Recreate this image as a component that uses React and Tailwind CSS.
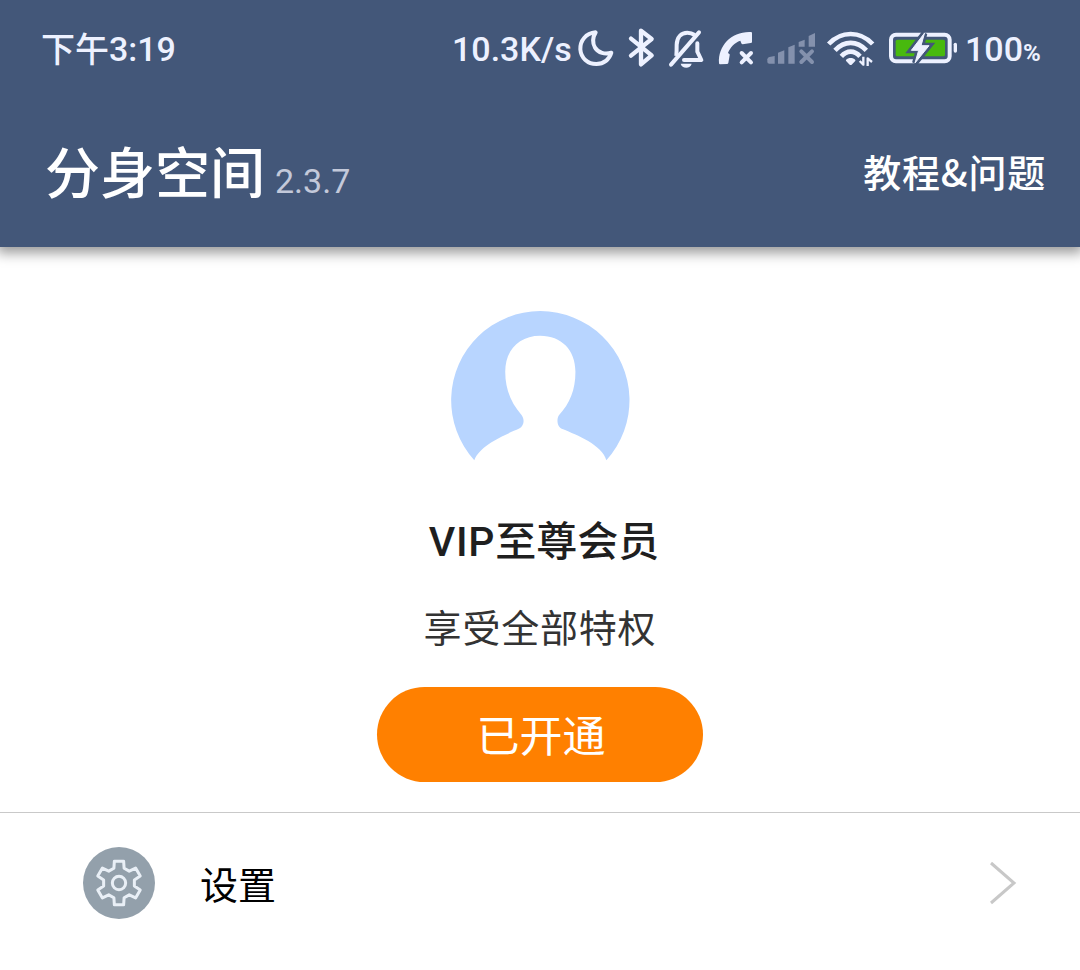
import React from 'react';

const CJK = "font-['Noto_Sans_CJK_SC',sans-serif]";
const LATIN = "font-['Roboto','Noto_Sans_CJK_SC',sans-serif]";

// Status bar glyphs are drawn on a 3x grid, 60px tall each
function StatusIcon({ box, width, children }) {
    return (
        <svg
            viewBox={box}
            width={width}
            height={60}
            className="shrink-0"
            fill="none"
            stroke="#edf1ff"
            strokeLinecap="round"
            strokeLinejoin="round"
        >
            {children}
        </svg>
    );
}

function MoonIcon() {
    return (
        <StatusIcon box="405 0 135 180" width={45}>
            <path strokeWidth="12" d="M467 37C437 40 420 62 421 88C423 114 443 132 469 132C492 132 508 118 514 98C495 104 475 99 465 83C457 68 459 50 467 37Z" />
        </StatusIcon>
    );
}

function BluetoothIcon() {
    return (
        <StatusIcon box="0 0 135 180" width={45}>
            <path strokeWidth="13" d="M33 56L95 106L63 133V32L95 57L33 107" />
        </StatusIcon>
    );
}

function BellOffIcon() {
    return (
        <StatusIcon box="135 0 135 180" width={45}>
            <path strokeWidth="12" d="M153 134L237 37" />
            <path strokeWidth="12" strokeLinecap="butt" d="M169 108C170 96 170 88 170 74C171 51 184 38 202 38C211 38 217 40 224 45" />
            <path strokeWidth="12" d="M232 70V95L244 120H192" />
            <path stroke="none" fill="#edf1ff" d="M182 131H215C212 147 185 147 182 131Z" />
        </StatusIcon>
    );
}

function CallIcon() {
    return (
        <StatusIcon box="270 0 150 180" width={50}>
            <path stroke="none" fill="#edf1ff" d="M393 36Q396 36 396 40V66Q396 69 392 69L368 73Q365 73 364 70L361 62C344 67 330 83 324 99L328 102Q330 103 329 106L325 129Q324 132 321 132L300 133Q297 133 297 129C294 76 336 33 393 36Z" />
            <path strokeWidth="12" d="M365 99L393 127M393 99L365 127" />
        </StatusIcon>
    );
}

function SignalIcon() {
    return (
        <StatusIcon box="420 0 180 180" width={60}>
            <g stroke="none" fill="#8491ad">
                <path d="M442 118Q443 112 448 111L464 108V131H448Q442 131 442 126Z" />
                <path d="M474 98L493 91V131H474Z" />
                <path d="M505 82L524 74V131H505Z" />
                <path d="M536 66L554 59V80H536Z" />
                <path d="M566 48L585 39V80H566Z" />
            </g>
            <path stroke="#8491ad" strokeWidth="12" d="M544 94L576 126M576 94L544 126" />
        </StatusIcon>
    );
}

function WifiIcon() {
    return (
        <StatusIcon box="30 0 180 180" width={60}>
            <g strokeWidth="14" strokeLinecap="butt">
                <path d="M56 72C94 32 150 32 188 72" />
                <path d="M75 91C103 61 141 61 169 91" />
                <path d="M94 109C111 90 133 90 150 109" />
            </g>
            <path stroke="none" fill="#edf1ff" d="M108 120C115 112 129 112 136 120Q137 122 135 124L125 134Q122 136 119 134L109 124Q107 122 108 120Z" />
            <path strokeWidth="7" strokeLinecap="butt" d="M160 110V134L149 123M173 138V115L186 126" />
        </StatusIcon>
    );
}

function BatteryIcon() {
    return (
        <StatusIcon box="210 0 255 180" width={85}>
            <rect x="243" y="44" width="176" height="80" rx="15" strokeWidth="12" />
            <rect x="257" y="59" width="148" height="50" rx="5" fill="#48b90e" stroke="none" />
            <path fill="#edf1ff" stroke="#435779" strokeWidth="18" strokeLinejoin="miter" d="M343 40L304 91H326L315 129L357 77H334Z" />
            <path fill="#edf1ff" stroke="#edf1ff" strokeWidth="3" d="M343 40L304 91H326L315 129L357 77H334Z" />
            <path strokeWidth="10" d="M436 73V93" />
        </StatusIcon>
    );
}

function StatusBar() {
    return (
        <div className={`${LATIN} flex h-[60px] items-center whitespace-nowrap pl-[41px] text-[35px] font-medium leading-none text-[#edf1ff]`}>
            <span className="w-[68px] text-[34px]">下午</span>
            <span className="mb-0.5 text-[34px]">3:19</span>
            <div className="ml-auto flex w-[628px] items-center">
                <span className="mb-0.5 w-[123px] text-[34px]">10.3K/s</span>
                <MoonIcon />
                <BluetoothIcon />
                <BellOffIcon />
                <CallIcon />
                <SignalIcon />
                <WifiIcon />
                <BatteryIcon />
                <span className="mb-0.5 text-[34px]">100</span>
                <span className="mt-[5px] text-[24px] font-bold">%</span>
            </div>
        </div>
    );
}

function Avatar() {
    return (
        <svg viewBox="60 30 544 456" width="181" height="152">
            <path
                fill="#b8d5ff"
                d="M133 481A268 268 0 1 1 530 481C518 435 440 405 400 388C380 382 380 355 388 345C420 310 437 270 437 215C437 150 395 107 331 107C268 107 226 150 226 215C226 270 245 310 275 345C285 358 283 378 268 386C225 405 150 435 133 481Z"
            />
        </svg>
    );
}

// [angle, radius] of one tooth, repeated every 60 degrees
const TOOTH = [[-19, 47], [-12, 67], [12, 67], [19, 47]];

function GearIcon() {
    const points = [];
    for (let i = 0; i < 6; i++) {
        TOOTH.forEach(([angle, r]) => {
            const a = ((angle + i * 60) * Math.PI) / 180;
            points.push(`${(r * Math.sin(a)).toFixed(1)},${(-r * Math.cos(a)).toFixed(1)}`);
        });
    }
    return (
        <svg viewBox="-108 -108 216 216" width="72" height="72" fill="none" stroke="#e9eff6" strokeWidth="9">
            <circle r="108" fill="#93a0ab" stroke="none" />
            <polygon points={points.join(' ')} strokeLinejoin="round" />
            <circle r="20" />
        </svg>
    );
}

export default function App() {
    return (
        <div className={`${CJK} h-[970px] w-[1080px] overflow-hidden bg-white`}>
            <header className="relative h-[247px] bg-[#435779] pt-5 shadow-[0_3px_12px_3px_rgba(0,0,0,0.4)]">
                <StatusBar />
                <div className="flex h-[182px] items-center justify-between pl-[45px] pr-[34px] text-white">
                    <div className="flex items-baseline pb-0.5">
                        <h1 className="text-[55px] font-medium leading-none">分身空间</h1>
                        <span className={`${LATIN} ml-[10px] text-[34px] leading-none text-[#c3c9da]`}>2.3.7</span>
                    </div>
                    <a className="text-[38px] font-medium leading-none tracking-[0.8px]">教程&amp;问题</a>
                </div>
            </header>

            <section className="flex h-[566px] flex-col items-center border-b border-[#c9c9c9] pt-[63px]">
                <Avatar />
                <h2 className={`${LATIN} ml-2 mt-[58px] text-[41px] font-medium leading-[44px] text-[#1f1f1f]`}>
                    <span className="tracking-[0.8px]">VIP</span>至尊会员
                </h2>
                <p className="mt-[40px] text-[38px] leading-[44px] tracking-[0.8px] text-[#333]">享受全部特权</p>
                <button className="mt-[39px] h-[95px] w-[326px] rounded-full bg-[#ff8000] pb-0.5 pl-0.5 text-[43px] leading-none text-white">
                    已开通
                </button>
            </section>

            <div className="flex h-[140px] items-center pl-[83px] pr-[63px]">
                <GearIcon />
                <span className="ml-[45px] text-[38px] leading-none text-black">设置</span>
                <svg viewBox="0 0 28 44" width="28" height="44" className="ml-auto" fill="none" stroke="#c8c8c8" strokeWidth="3">
                    <path d="M2 2L25 22L2 42" />
                </svg>
            </div>
        </div>
    );
}
